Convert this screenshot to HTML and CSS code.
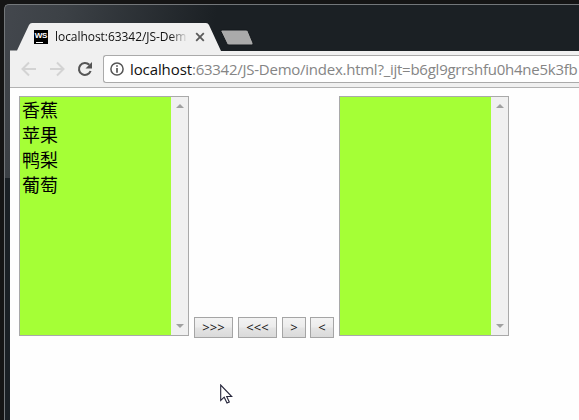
FILE: index.html
```html
<!DOCTYPE html>
<html lang="zh">
<head>
<meta charset="utf-8">
<title>JS-Demo</title>
<link rel="stylesheet" href="styles.css">
</head>
<body>
<div class="window">
  <header class="tabs">
    <div class="tab">
      <svg class="tab-shape" width="210" height="28" viewBox="0 0 210 28"><path d="M0 28V27.5H7L19 2Q20 0 22 0H196Q198 0 199 2L211 28Z" fill="#f0f0f0"/></svg>
      <span class="favicon">WS</span>
      <span class="tab-title">localhost:63342/JS-Dem</span>
      <svg class="close" width="10" height="10" viewBox="0 0 10 10"><path d="M1.2 1.2L8.8 8.8M8.8 1.2L1.2 8.8" stroke="#5a5a5a" stroke-width="1.8"/></svg>
    </div>
    <svg class="new-tab" width="34" height="17" viewBox="0 0 34 17"><path d="M2 1H26Q27.500 1 28 2L33 14Q33.500 16 32 16H9Q7.500 16 7 15L1 2.500Q.5 1 2 1Z" fill="#aaa" stroke="#15191c" stroke-width="1"/></svg>
  </header>
  <nav class="toolbar">
    <svg class="nav-icons" width="92" height="36" viewBox="0 0 92 36" fill="none">
      <path d="M26 18H13M19 11.500L12.500 18L19 24.500M40 18H53M47 11.500L53.500 18L47 24.500" stroke="#d3d3d3" stroke-width="2"/>
      <path d="M79.300 13.800A6 6 0 1 0 80.600 20" stroke="#555" stroke-width="2.100"/><path d="M82 11V17.500H75.500Z" fill="#555"/>
    </svg>
    <div class="address">
      <svg width="14" height="14" viewBox="0 0 14 14"><circle cx="7" cy="7" r="6.100" fill="none" stroke="#555" stroke-width="1.500"/><path d="M7 3.200V4.800M7 6V10.700" stroke="#555" stroke-width="1.700"/></svg>
      <span class="url"><b>localhost</b>:63342/JS-Demo/index.html?_ijt=b6gl9grrshfu0h4ne5k3fb</span>
    </div>
  </nav>
  <main class="page">
    <div class="list">
      <ul><li>香蕉</li><li>苹果</li><li>鸭梨</li><li>葡萄</li></ul>
      <div class="scroll"><i class="up"></i><i class="down"></i></div>
    </div>
    <div class="actions">
      <button class="wide">&gt;&gt;&gt;</button>
      <button class="wide">&lt;&lt;&lt;</button>
      <button>&gt;</button>
      <button>&lt;</button>
    </div>
    <div class="list">
      <ul></ul>
      <div class="scroll"><i class="up"></i><i class="down"></i></div>
    </div>
  </main>
</div>
<svg class="cursor" width="14" height="21" viewBox="0 0 14 21"><path d="M.7 1V16.500L4.200 13.200L7 19L9.300 18L6.700 12.500H11.700Z" fill="#fff" stroke="#25253a" stroke-width="1.100"/></svg>
</body>
</html>
```
FILE: styles.css
```css
* { box-sizing: border-box; }
body {
  margin: 0;
  width: 579px;
  height: 420px;
  padding: 4px 0 0 4px;
  overflow: hidden;
  background: #151515;
  font-family: "Open Sans", "Noto Sans CJK SC", sans-serif;
}
.window {
  height: 416px;
  padding-left: 5px;
  border: 1px solid #73777a;
  border-width: 1px 0 0 1px;
  border-top-left-radius: 5px;
  background:
    linear-gradient(#43474d 0, #3b4045 173px, #1a2025 173px) 0 0 / 5px 100% no-repeat,
    linear-gradient(100deg, #43474d 0, #3c4146 60px, #1b2024 210px);
}
.tabs {
  display: flex;
  height: 46px;
  padding-top: 18px;
}
.tab {
  position: relative;
  display: flex;
  align-items: center;
  width: 210px;
  height: 28px;
  padding-left: 24px;
}
.tab-shape { position: absolute; left: 0; top: 0; overflow: visible; }
.favicon {
  position: relative;
  width: 14px;
  height: 14px;
  background: #000;
  color: #fff;
  font: bold 8px/11px "Liberation Sans", sans-serif;
  letter-spacing: -.3px;
  text-align: center;
}
.favicon::after {
  content: "";
  position: absolute;
  left: 2px;
  bottom: 1px;
  width: 7px;
  height: 1px;
  background: #fff;
}
.tab-title {
  position: relative;
  width: 137px;
  margin-left: 7px;
  white-space: nowrap;
  font-size: 12px;
  line-height: 26px;
  letter-spacing: -.05px;
  color: #111;
  -webkit-mask-image: linear-gradient(90deg, #000 115px, transparent 133px);
  mask-image: linear-gradient(90deg, #000 115px, transparent 133px);
}
.close { position: relative; margin-left: 3px; }
.new-tab { margin: 6px 0 0; }
.toolbar {
  display: flex;
  height: 37px;
  background: #f0f0f0;
  border-bottom: 1px solid #b2b2b2;
}
.nav-icons { flex: none; margin-right: 1px; }
.address {
  display: flex;
  flex: 1;
  align-items: center;
  height: 28px;
  margin-top: 4px;
  padding-left: 6px;
  overflow: hidden;
  border: 1px solid #aaa;
  border-right: 0;
  border-radius: 3px 0 0 3px;
  background: #fff;
}
.address svg { flex: none; }
.url {
  margin-left: 6px;
  white-space: nowrap;
  font-size: 15px;
  line-height: 26px;
  letter-spacing: -.25px;
  color: #858585;
}
.url b { font-weight: normal; letter-spacing: -.1px; color: #111; }
.page {
  display: flex;
  height: 332px;
  padding: 8px 0 0 9px;
  background: #fefefe;
}
.list {
  display: flex;
  flex: none;
  width: 170px;
  height: 240px;
  border: 1px solid #a9a9a9;
  background: #a5ff36;
}
.list ul {
  flex: 1;
  margin: 0;
  padding: 0 2px;
  list-style: none;
  font: 18px/25px "Noto Sans CJK SC", sans-serif;
  color: #000;
}
.scroll {
  display: flex;
  flex-direction: column;
  justify-content: space-between;
  align-items: center;
  width: 17px;
  padding: 7px 0 7px;
  background: #f0f0f0;
}
.scroll i { border: 4px solid transparent; border-width: 0 4px; }
.scroll .up { border-bottom: 4px solid #a0a0a0; }
.scroll .down { border-top: 4px solid #a0a0a0; }
.actions {
  display: flex;
  width: 150px;
  padding: 221px 5px 0;
  gap: 4px;
}
button {
  width: 24px;
  height: 21px;
  padding: 0 0 1px;
  border: 1px solid #a5a5a5;
  background: linear-gradient(#f3f3f3 0, #ececec 48%, #e4e4e4 52%, #dadada);
  color: #111;
  font: 13px/17px "Open Sans", sans-serif;
}
button.wide { width: 39px; margin-right: 1px; }
.cursor { position: absolute; left: 220px; top: 384px; }
```
